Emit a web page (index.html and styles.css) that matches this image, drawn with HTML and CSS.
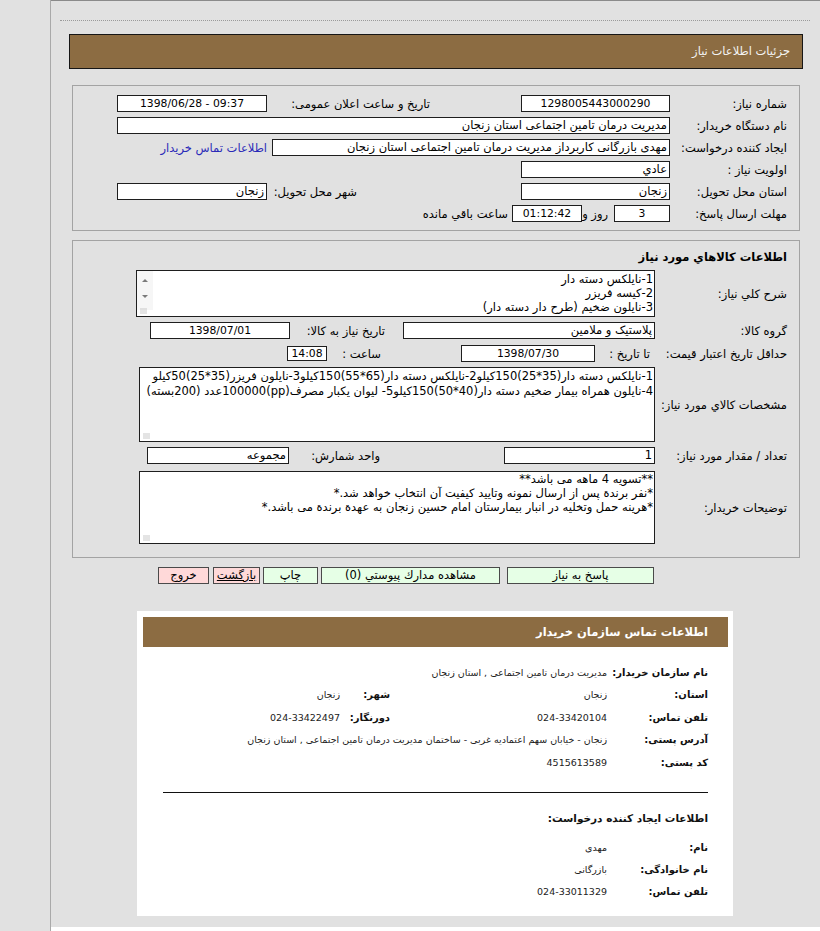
FILE: index.html
```html
<!DOCTYPE html>
<html lang="fa" dir="rtl">
<head>
<meta charset="utf-8">
<title>جزئیات اطلاعات نیاز</title>
<link rel="stylesheet" href="styles.css">
</head>
<body>
<div class="wrap">
  <div class="main">
    <div class="dots"></div>
    <div class="titlebar">جزئیات اطلاعات نیاز</div>

    <div class="panel p1">
      <div class="row">
        <div class="lbl">شماره نیاز:</div>
        <div class="box w149 c ltr">1298005443000290</div>
        <div class="lbl2 l-ann">تاریخ و ساعت اعلان عمومی:</div>
        <div class="box w150 c ltr">1398/06/28 - 09:37</div>
      </div>
      <div class="row">
        <div class="lbl">نام دستگاه خریدار:</div>
        <div class="box w553">مدیریت درمان تامین اجتماعی استان زنجان</div>
      </div>
      <div class="row">
        <div class="lbl">ایجاد کننده درخواست:</div>
        <div class="box w398">مهدی بازرگانی کاربرداز مدیریت درمان تامین اجتماعی استان زنجان</div>
        <a class="link">اطلاعات تماس خریدار</a>
      </div>
      <div class="row">
        <div class="lbl">اولویت نیاز :</div>
        <div class="box w149">عادي</div>
      </div>
      <div class="row">
        <div class="lbl">استان محل تحویل:</div>
        <div class="box w149">زنجان</div>
        <div class="lbl2 l-city">شهر محل تحویل:</div>
        <div class="box w150">زنجان</div>
      </div>
      <div class="row">
        <div class="lbl">مهلت ارسال پاسخ:</div>
        <div class="box w56 c ltr">3</div>
        <div class="txt t-day">روز و</div>
        <div class="box w70 c ltr">01:12:42</div>
        <div class="txt t-rem">ساعت باقي مانده</div>
      </div>
    </div>

    <div class="panel p2">
      <div class="ptitle">اطلاعات کالاهاي مورد نیاز</div>
      <div class="row r-ta1">
        <div class="lbl">شرح کلي نیاز:</div>
        <div class="ta ta1">
          <div class="ta-text">1-نایلکس دسته دار<br>2-کیسه فریزر<br>3-نایلون ضخیم (طرح دار دسته دار)</div>
          <div class="sb"><span class="up"></span><span class="down"></span></div>
          <span class="grip"></span>
        </div>
      </div>
      <div class="row r-grp">
        <div class="lbl">گروه کالا:</div>
        <div class="box w252">پلاستیک و ملامین</div>
        <div class="lbl2 l-need">تاریخ نیاز به کالا:</div>
        <div class="box w140 c ltr">1398/07/01</div>
      </div>
      <div class="row r-min">
        <div class="lbl">حداقل تاریخ اعتبار قیمت:</div>
        <div class="txt t-to">تا تاریخ :</div>
        <div class="box w134 c ltr">1398/07/30</div>
        <div class="lbl2 l-time">ساعت :</div>
        <div class="box w40 h15 c ltr">14:08</div>
      </div>
      <div class="row r-ta2">
        <div class="lbl">مشخصات کالاي مورد نیاز:</div>
        <div class="ta ta2">
          <div class="ta-text">1-نایلکس دسته دار(35*25)150کیلو2-نایلکس دسته دار(65*55)150کیلو3-نایلون فریزر(35*25)50کیلو<br>4-نایلون همراه بیمار ضخیم دسته دار(40*50)150کیلو5- لیوان یکبار مصرف(pp)100000عدد (200بسته)</div>
          <span class="grip"></span>
        </div>
      </div>
      <div class="row r-qty">
        <div class="lbl">تعداد / مقدار مورد نیاز:</div>
        <div class="box w151">1</div>
        <div class="lbl2 l-unit">واحد شمارش:</div>
        <div class="box w142">مجموعه</div>
      </div>
      <div class="row r-ta3">
        <div class="lbl">توضیحات خریدار:</div>
        <div class="ta ta3">
          <div class="ta-text">**تسویه 4 ماهه می باشد**<br>*نفر برندة پس از ارسال نمونه وتایید کیفیت آن انتخاب خواهد شد.*<br>*هرینه حمل وتخلیه در انبار بیمارستان امام حسین زنجان به عهدة برندة می باشد.*</div>
          <span class="grip"></span>
        </div>
      </div>
    </div>

    <div class="btns">
      <div class="btn green b-ans">پاسخ به نیاز</div>
      <div class="btn green b-docs">مشاهده مدارك پیوستي (0)</div>
      <div class="btn green b-print">چاپ</div>
      <div class="btn pink b-back"><span class="u">بازگشت</span></div>
      <div class="btn pink b-exit">خروج</div>
    </div>

    <div class="card">
      <div class="card-head">اطلاعات تماس سازمان خریدار</div>
      <div class="info">
        <div class="k">نام سازمان خریدار:</div>
        <div class="v span3">مدیریت درمان تامین اجتماعی , استان زنجان</div>

        <div class="k">استان:</div>
        <div class="v">زنجان</div>
        <div class="k">شهر:</div>
        <div class="v">زنجان</div>

        <div class="k">تلفن تماس:</div>
        <div class="v"><span class="n">024-33420104</span></div>
        <div class="k">دورنگار:</div>
        <div class="v"><span class="n">024-33422497</span></div>

        <div class="k">آدرس پستی:</div>
        <div class="v span3">زنجان - خیابان سهم اعتمادیه غربی - ساختمان مدیریت درمان تامین اجتماعی , استان زنجان</div>

        <div class="k">کد پستی:</div>
        <div class="v span3">4515613589</div>
      </div>
      <div class="hr"></div>
      <div class="sub">اطلاعات ایجاد کننده درخواست:</div>
      <div class="info info2">
        <div class="k">نام:</div>
        <div class="v span3">مهدی</div>
        <div class="k">نام خانوادگی:</div>
        <div class="v span3">بازرگانی</div>
        <div class="k">تلفن تماس:</div>
        <div class="v span3"><span class="n">024-33011329</span></div>
      </div>
    </div>
  </div>
</div>
</body>
</html>
```

FILE: styles.css
```css
* { box-sizing: border-box; }
html, body { margin: 0; height: 100%; }
body {
  background: #e1e1e1;
  font-family: "DejaVu Sans", Tahoma, sans-serif;
  font-size: 11.5px;
  color: #000;
}
.wrap {
  margin-left: 50px;
  border-left: 1px solid #a9a9a9;
  background: #fff;
  min-height: 100%;
  direction: rtl;
}
.main {
  background: #e1e1e1;
  border-top: 1px solid #8a8a8a;
  padding: 19px 0 11px;
}
.dots {
  border-top: 1px dotted #9a9a9a;
  margin: 0 10px 0 9px;
}
.titlebar {
  margin: 13px 17px 0 18px;
  height: 35px;
  background: #8c6c42;
  border: 1px solid #161616;
  color: #f4f4f4;
  font-size: 11.5px;
  line-height: 33px;
  padding-right: 12px;
}
.panel {
  margin: 16px 20px 0 21px;
  border: 1px solid #a3a3a3;
}
.p1 {
  padding: 9px 0 8px;
  display: flex;
  flex-direction: column;
  gap: 5px;
}
.row {
  display: flex;
  align-items: center;
  height: 17px;
  white-space: nowrap;
}
.lbl {
  width: 129px;
  flex: none;
  padding-right: 12px;
  white-space: nowrap;
}
.p2 .lbl { width: 144px; }
.lbl2 { flex: none; white-space: nowrap; }
.l-ann { width: 254px; padding-right: 91px; }
.l-city { width: 254px; padding-right: 164px; }
.l-need { width: 113px; padding-right: 18px; }
.l-time { width: 134px; padding-right: 80px; }
.l-unit { width: 215px; padding-right: 124px; }
.txt { flex: none; white-space: nowrap; }
.t-day { width: 32px; padding-right: 6px; }
.t-rem { padding-right: 4px; }
.t-to { width: 60px; padding-right: 5px; }
.box {
  flex: none;
  height: 17px;
  background: #fff;
  border: 1px solid #1e1e1e;
  line-height: 15px;
  padding: 0 2px;
  overflow: hidden;
  white-space: nowrap;
}
.h15 { height: 15px; line-height: 13px; }
.c { text-align: center; }
.ltr { direction: ltr; font-size: 10.8px; }
.w40 { width: 40px; }
.w56 { width: 56px; }
.w70 { width: 70px; }
.w134 { width: 134px; }
.w140 { width: 140px; }
.w142 { width: 142px; }
.w149 { width: 149px; }
.w150 { width: 150px; }
.w151 { width: 151px; }
.w252 { width: 252px; }
.w398 { width: 398px; }
.w553 { width: 553px; }
.link {
  color: #2a2ab8;
  margin-right: 5px;
  cursor: pointer;
}

.p2 { margin-top: 9px; padding: 8px 0 13px; }
.ptitle {
  font-weight: bold;
  font-size: 11.5px;
  line-height: 16px;
  padding-right: 12px;
  margin-bottom: 5px;
}
.r-ta1 { height: 47px; }
.r-grp { margin-top: 5px; }
.r-min { margin-top: 6px; }
.r-ta2 { height: 75px; margin-top: 5px; }
.r-qty { margin-top: 5px; }
.r-ta3 { height: 73px; margin-top: 7px; }
.ta {
  position: relative;
  flex: none;
  height: 100%;
  background: #fff;
  border: 1px solid #1e1e1e;
  display: flex;
  overflow: hidden;
}
.ta1 { width: 519px; }
.ta2, .ta3 { width: 516px; }
.ta-text {
  flex: 1;
  padding: 1px 1px 0 2px;
  line-height: 14px;
  white-space: nowrap;
  overflow: hidden;
}
.ta2 .ta-text { line-height: 15px; }
.ta3 .ta-text { line-height: 14px; padding-top: 0; }
.sb {
  flex: none;
  width: 16px;
  height: 39px;
  background: #f6f6f6;
  position: relative;
}
.sb .up, .sb .down {
  position: absolute;
  left: 5px;
  width: 0;
  height: 0;
  border-left: 3px solid transparent;
  border-right: 3px solid transparent;
}
.sb .up { top: 8px; border-bottom: 3px solid #7a7a7a; }
.sb .down { top: 24px; border-top: 3px solid #7a7a7a; }
.grip {
  position: absolute;
  left: 3px;
  bottom: 2px;
  width: 7px;
  height: 6px;
  background-image: radial-gradient(circle, #c4c4c4 0.6px, transparent 0.8px);
  background-size: 2px 2px;
}

.btns {
  display: flex;
  margin-top: 9px;
  padding-right: 166px;
  height: 17px;
}
.btn {
  flex: none;
  height: 17px;
  border: 1px solid #4a4a4a;
  line-height: 15px;
  text-align: center;
  white-space: nowrap;
  font-size: 11.5px;
}
.green { background: #e6ffe6; }
.pink { background: #ffd9d9; }
.b-ans { width: 147px; }
.b-docs { width: 179px; margin-right: 7px; }
.b-print { width: 55px; margin-right: 3px; }
.b-back { width: 47px; margin-right: 3px; }
.b-exit { width: 51px; margin-right: 4px; }
.u { text-decoration: underline; }

.card {
  width: 596px;
  height: 305px;
  margin: 27px 87px 0 auto;
  background: #fff;
  padding: 6px 5px 6px 6px;
}
.card-head {
  height: 30px;
  background: #8c6c42;
  color: #fff;
  font-weight: bold;
  font-size: 11.5px;
  line-height: 30px;
  padding-right: 20px;
}
.info {
  display: grid;
  grid-template-columns: 101px 217px 50px 1fr;
  grid-auto-rows: 22.5px;
  align-items: center;
  margin: 14px 20px 0 0;
}
.info2 { grid-auto-rows: 22px; margin-top: 9px; }
.k {
  font-weight: bold;
  font-size: 10px;
  color: #111;
  white-space: nowrap;
}
.v {
  font-size: 9.5px;
  color: #222;
  white-space: nowrap;
}
.span3 { grid-column: span 3; }
.n { direction: ltr; unicode-bidi: embed; }
.hr {
  border-top: 1px solid #111;
  margin: 18px 20px 0 20px;
}
.sub {
  font-weight: bold;
  font-size: 10.5px;
  line-height: 20px;
  margin: 15px 20px 0 0;
  color: #111;
}
```
